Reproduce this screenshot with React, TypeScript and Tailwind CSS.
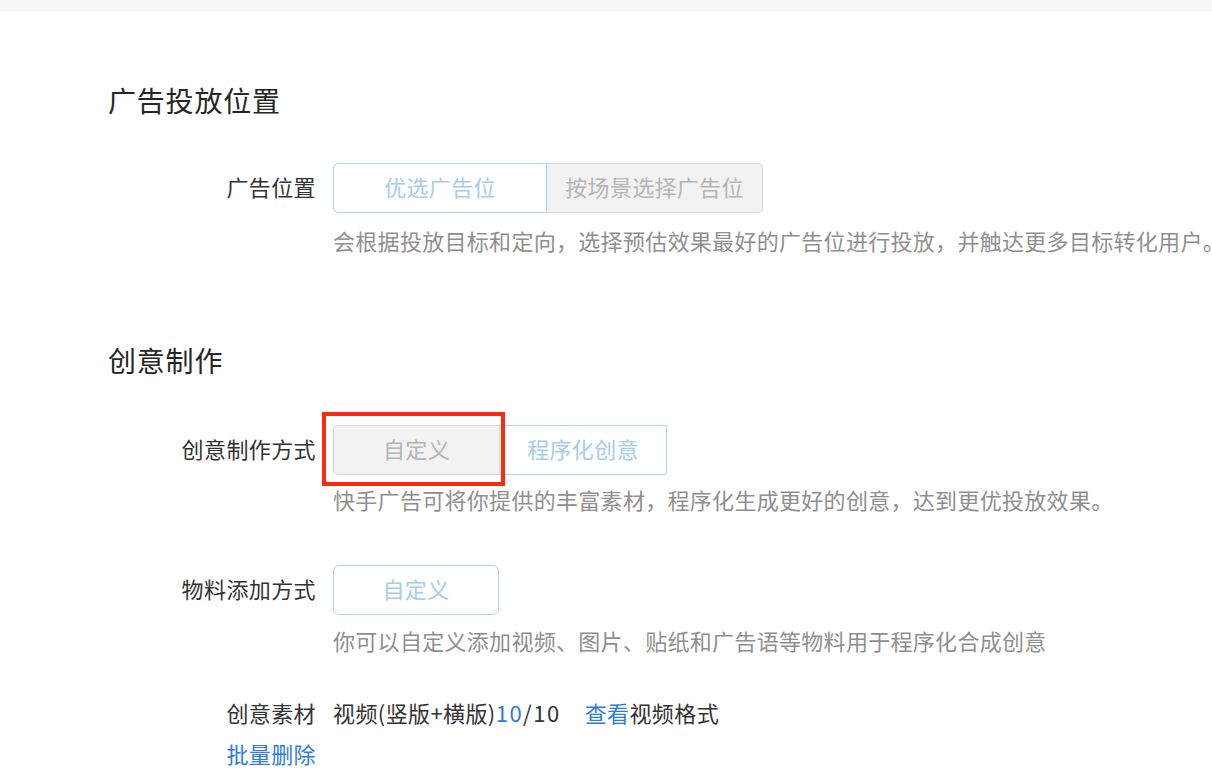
const font = { fontFamily: '"Noto Sans CJK SC", "Noto Sans", sans-serif' };

const Row = ({ label, children }: { label: React.ReactNode; children: React.ReactNode }) => (
    <div className="flex items-center">
        <div className="w-[208px] shrink-0 pb-[3px] text-right text-[22px] tracking-[0.4px] text-[#333]">{label}</div>
        <div className="ml-[17px]">{children}</div>
    </div>
);

const Desc = ({ text, className }: { text: string; className: string }) => (
    <div className={`ml-[225px] whitespace-nowrap text-[22px] leading-[30px] tracking-[0.3px] text-[#8f8f8f] ${className}`}>{text}</div>
);

const App = () => {
    return (
        <div className="h-[776px] w-[1212px] overflow-hidden bg-white" style={font}>
            <div className="h-[11px] bg-[#f5f6f8]" />

            <div className="pl-[108px]">
                <h2 className="mt-[69px] text-[28px] leading-[40px] tracking-[0.8px] text-[#262626]">广告投放位置</h2>

                <div className="mt-[43px]">
                    <Row label="广告位置">
                        <div className="flex h-[50px] text-[22px] tracking-[0.3px]">
                            <div className="flex w-[214px] items-center justify-center rounded-l-[5px] border border-[#a9d3f3] pb-[3px] text-[#a6cdee]">优选广告位</div>
                            <div className="flex w-[216px] items-center justify-center rounded-r-[5px] border border-l-0 border-[#d9d9d9] bg-[#f2f2f2] pb-[3px] text-[#b5b5b5]">按场景选择广告位</div>
                        </div>
                    </Row>
                </div>
                <Desc className="mt-[12px]" text="会根据投放目标和定向，选择预估效果最好的广告位进行投放，并触达更多目标转化用户。" />

                <h2 className="mt-[85px] text-[28px] leading-[40px] tracking-[0.8px] text-[#262626]">创意制作</h2>

                <div className="mt-[45px]">
                    <Row label="创意制作方式">
                        <div className="relative flex h-[50px] text-[22px] tracking-[0.3px]">
                            <div className="flex w-[167px] items-center justify-center rounded-l-[5px] border border-[#d9d9d9] bg-[#f2f2f2] pb-[3px] text-[#b5b5b5]">自定义</div>
                            <div className="flex w-[167px] items-center justify-center rounded-r-[3px] border border-l-0 border-[#a9d3f3] pb-[3px] text-[#a6cdee]">程序化创意</div>
                            <div className="absolute left-[-11px] top-[-13px] h-[74px] w-[183px] border-4 border-[#ff2a0d]" />
                        </div>
                    </Row>
                </div>
                <Desc className="mt-[9px]" text="快手广告可将你提供的丰富素材，程序化生成更好的创意，达到更优投放效果。" />

                <div className="mt-[51px]">
                    <Row label="物料添加方式">
                        <div className="flex h-[50px] w-[166px] items-center justify-center rounded-[6px] border border-[#a9d3f3] pb-[3px] text-[22px] tracking-[0.3px] text-[#a6cdee]">自定义</div>
                    </Row>
                </div>
                <Desc className="mt-[10px]" text="你可以自定义添加视频、图片、贴纸和广告语等物料用于程序化合成创意" />

                <div className="mt-[42px] flex items-start text-[22px] leading-[30px] tracking-[0.4px]">
                    <div className="flex w-[208px] shrink-0 flex-col items-end gap-[11px]">
                        <span className="text-[#333]">创意素材</span>
                        <span className="text-[#2f7ce0]">批量删除</span>
                    </div>
                    <div className="ml-[17px] whitespace-nowrap text-[#333]">
                        视频(竖版+横版)<span className="tracking-[1.5px] text-[#2f7ce0]">10</span><span className="tracking-[1.5px]">/10</span>
                        <span className="ml-[24px] text-[#2f7ce0]">查看</span>视频格式
                    </div>
                </div>
            </div>
        </div>
    );
};

export default App;
